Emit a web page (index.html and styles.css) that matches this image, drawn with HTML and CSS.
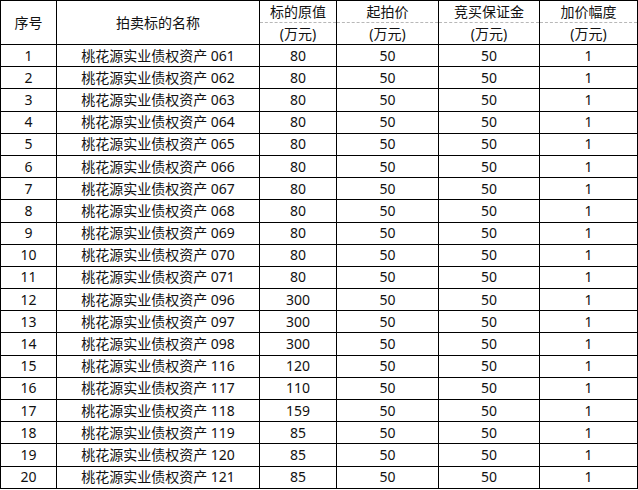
FILE: index.html
```html
<!DOCTYPE html>
<html lang="zh-CN">
<head>
<meta charset="utf-8">
<title>拍卖标的</title>
<link rel="stylesheet" href="styles.css">
</head>
<body>
<table class="lots">
  <colgroup>
    <col class="c-no">
    <col class="c-name">
    <col class="c-val">
    <col class="c-start">
    <col class="c-dep">
    <col class="c-inc">
  </colgroup>
  <thead>
    <tr class="h1">
      <th rowspan="2">序号</th>
      <th rowspan="2">拍卖标的名称</th>
      <th class="top">标的原值</th>
      <th class="top">起拍价</th>
      <th class="top">竞买保证金</th>
      <th class="top">加价幅度</th>
    </tr>
    <tr class="h2">
      <th class="bot">(万元)</th>
      <th class="bot">(万元)</th>
      <th class="bot">(万元)</th>
      <th class="bot">(万元)</th>
    </tr>
  </thead>
  <tbody>
    <tr><td>1</td><td>桃花源实业债权资产 061</td><td>80</td><td>50</td><td>50</td><td>1</td></tr>
    <tr><td>2</td><td>桃花源实业债权资产 062</td><td>80</td><td>50</td><td>50</td><td>1</td></tr>
    <tr><td>3</td><td>桃花源实业债权资产 063</td><td>80</td><td>50</td><td>50</td><td>1</td></tr>
    <tr><td>4</td><td>桃花源实业债权资产 064</td><td>80</td><td>50</td><td>50</td><td>1</td></tr>
    <tr><td>5</td><td>桃花源实业债权资产 065</td><td>80</td><td>50</td><td>50</td><td>1</td></tr>
    <tr><td>6</td><td>桃花源实业债权资产 066</td><td>80</td><td>50</td><td>50</td><td>1</td></tr>
    <tr><td>7</td><td>桃花源实业债权资产 067</td><td>80</td><td>50</td><td>50</td><td>1</td></tr>
    <tr><td>8</td><td>桃花源实业债权资产 068</td><td>80</td><td>50</td><td>50</td><td>1</td></tr>
    <tr><td>9</td><td>桃花源实业债权资产 069</td><td>80</td><td>50</td><td>50</td><td>1</td></tr>
    <tr><td>10</td><td>桃花源实业债权资产 070</td><td>80</td><td>50</td><td>50</td><td>1</td></tr>
    <tr><td>11</td><td>桃花源实业债权资产 071</td><td>80</td><td>50</td><td>50</td><td>1</td></tr>
    <tr><td>12</td><td>桃花源实业债权资产 096</td><td>300</td><td>50</td><td>50</td><td>1</td></tr>
    <tr><td>13</td><td>桃花源实业债权资产 097</td><td>300</td><td>50</td><td>50</td><td>1</td></tr>
    <tr><td>14</td><td>桃花源实业债权资产 098</td><td>300</td><td>50</td><td>50</td><td>1</td></tr>
    <tr><td>15</td><td>桃花源实业债权资产 116</td><td>120</td><td>50</td><td>50</td><td>1</td></tr>
    <tr><td>16</td><td>桃花源实业债权资产 117</td><td>110</td><td>50</td><td>50</td><td>1</td></tr>
    <tr><td>17</td><td>桃花源实业债权资产 118</td><td>159</td><td>50</td><td>50</td><td>1</td></tr>
    <tr><td>18</td><td>桃花源实业债权资产 119</td><td>85</td><td>50</td><td>50</td><td>1</td></tr>
    <tr><td>19</td><td>桃花源实业债权资产 120</td><td>85</td><td>50</td><td>50</td><td>1</td></tr>
    <tr><td>20</td><td>桃花源实业债权资产 121</td><td>85</td><td>50</td><td>50</td><td>1</td></tr>
  </tbody>
</table>
</body>
</html>
```
FILE: styles.css
```css
html, body {
  margin: 0;
  padding: 0;
  background: #ffffff;
}

.lots {
  border-collapse: collapse;
  table-layout: fixed;
  width: 637px;
  font-family: "Noto Sans", "Noto Sans CJK SC", sans-serif;
  font-size: 14px;
  color: #111111;
}

.c-no { width: 56px; }
.c-name { width: 203px; }
.c-val { width: 77px; }
.c-start { width: 102px; }
.c-dep { width: 101px; }
.c-inc { width: 98px; }

.lots th,
.lots td {
  border: 1px solid #000000;
  padding: 0;
  text-align: center;
  vertical-align: middle;
  font-weight: normal;
  line-height: 18px;
  white-space: nowrap;
  overflow: hidden;
}

.lots .h1,
.lots .h2 {
  height: 22px;
}

.lots th.top {
  border-bottom: 1px dashed #b8b8b8;
}

.lots th.bot {
  border-top: 1px dashed #b8b8b8;
}

.lots tbody tr {
  height: 22.2px;
}
```
